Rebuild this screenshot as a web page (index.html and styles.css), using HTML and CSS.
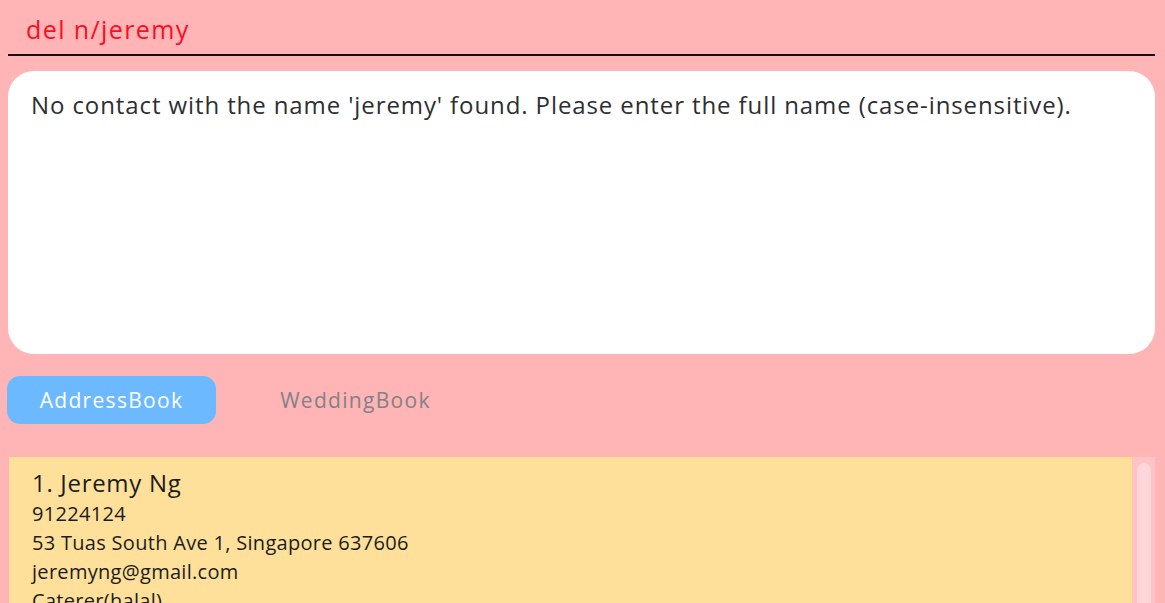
FILE: index.html
```html
<!DOCTYPE html>
<html>
<head>
<meta charset="utf-8">
<link rel="stylesheet" href="styles.css">
</head>
<body>
<div class="app">
  <div class="command">
    <div class="command-text">del n/jeremy</div>
  </div>
  <div class="result">No contact with the name 'jeremy' found. Please enter the full name (case-insensitive).</div>
  <div class="tabs">
    <div class="tab tab-active">AddressBook</div>
    <div class="tab">WeddingBook</div>
  </div>
  <div class="list">
    <div class="cards">
      <div class="card">
        <div class="card-name">1. Jeremy Ng</div>
        <div class="card-line">91224124</div>
        <div class="card-line">53 Tuas South Ave 1, Singapore 637606</div>
        <div class="card-line">jeremyng@gmail.com</div>
        <div class="card-line">Caterer(halal)</div>
      </div>
    </div>
    <div class="scrollbar"><div class="thumb"></div></div>
  </div>
</div>
</body>
</html>
```
FILE: styles.css
```css
html, body {
  margin: 0;
  padding: 0;
  height: 100%;
  overflow: hidden;
}
body {
  background: #ffb4b5;
  font-family: "Open Sans", "Noto Sans", sans-serif;
}
.app {
  padding: 0 10px 0 8px;
}
.command {
  height: 54px;
  border-bottom: 2px solid #111;
  display: flex;
  align-items: center;
  padding-left: 18px;
}
.command-text {
  color: #ff0b22;
  font-size: 25px;
  letter-spacing: 1.4px;
  margin-top: 3px;
}
.result {
  margin-top: 15px;
  height: 283px;
  background: #fff;
  border-radius: 26px;
  padding: 17px 23px;
  box-sizing: border-box;
  color: #2e2e33;
  font-size: 24px;
  letter-spacing: 0.9px;
}
.tabs {
  margin-top: 22px;
  display: flex;
}
.tab {
  height: 48px;
  width: 209px;
  display: flex;
  align-items: center;
  justify-content: center;
  font-size: 21px;
  letter-spacing: 1.3px;
  color: #828285;
  border-radius: 13px;
  margin-left: -1px;
  margin-right: 36px;
}
.tab-active {
  background: #6cb9ff;
  color: #fff;
}
.list {
  margin-top: 33px;
  margin-left: 1px;
  display: flex;
  height: 200px;
}
.cards {
  flex: 1;
}
.card {
  background: #ffe09b;
  padding: 9px 23px;
  height: 200px;
  box-sizing: border-box;
  color: #1c1c1c;
}
.card-name {
  font-size: 24px;
  letter-spacing: 0.7px;
  line-height: 33px;
}
.card-line {
  font-size: 20px;
  letter-spacing: 0.3px;
  line-height: 29px;
}
.scrollbar {
  width: 23px;
  background: #ffc3c6;
  padding: 6px 4px 0 5px;
  box-sizing: border-box;
}
.thumb {
  background: #ffd7da;
  border-radius: 7px;
  height: 200px;
}
```
